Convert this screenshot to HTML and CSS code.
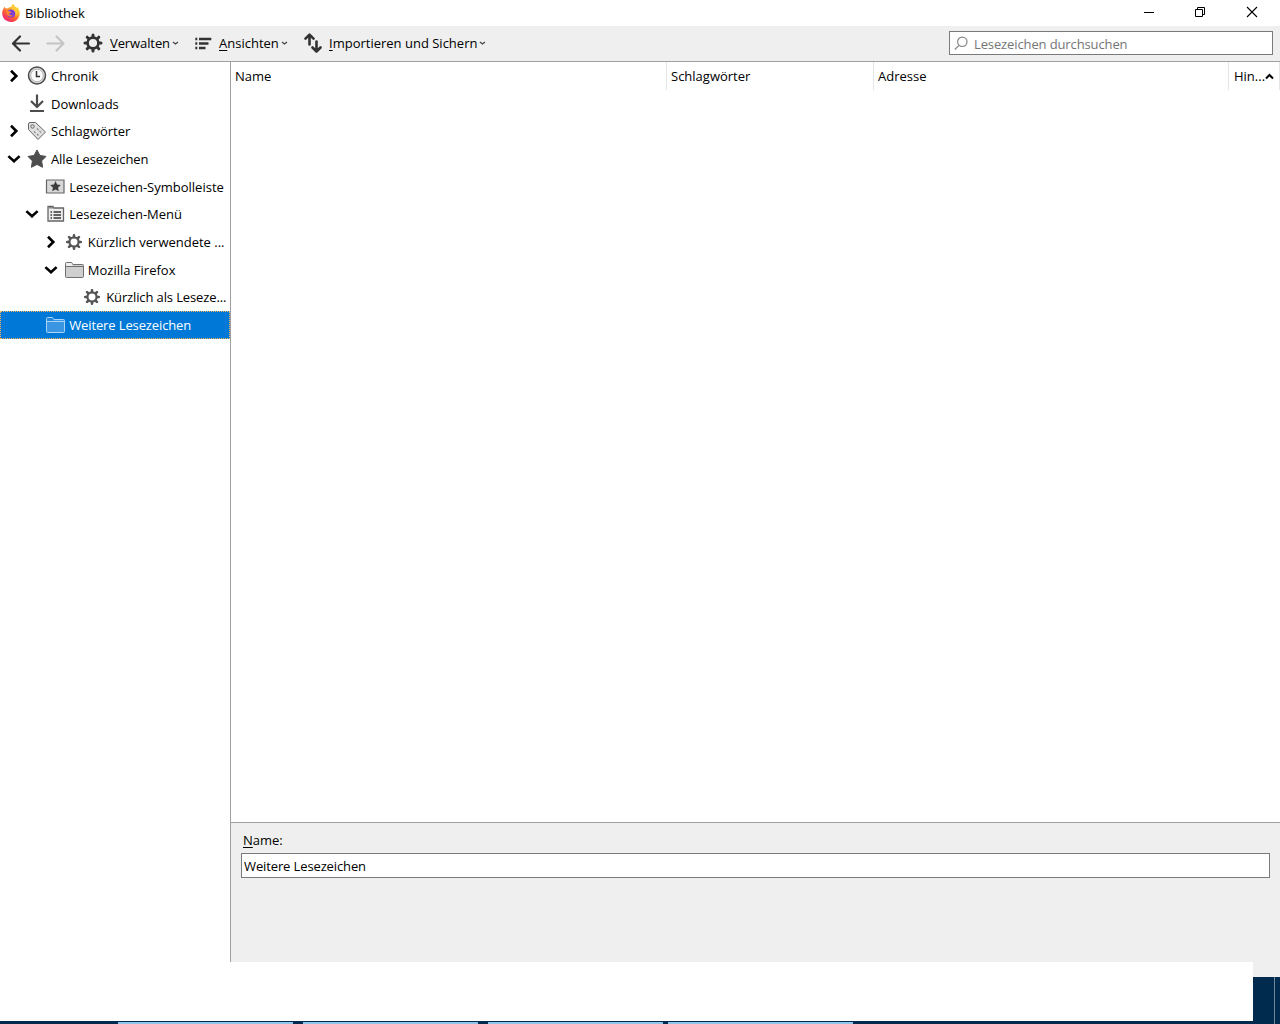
FILE: index.html
```html
<!DOCTYPE html>
<html lang="de">
<head>
    <meta charset="UTF-8">
    <title>Bibliothek</title>
    <link rel="stylesheet" href="styles.css">
</head>
<body>
    <!-- shared icons -->
    <svg class="defs">
        <symbol id="right" viewBox="0 0 14 14"><path d="M4 1.800 9.300 7 4 12.200" fill="none" stroke="#000" stroke-width="2.600"/></symbol>
        <symbol id="down" viewBox="0 0 14 14"><path d="M1.400 4.100 7 9.300l5.600-5.200" fill="none" stroke="#000" stroke-width="2.600"/></symbol>
        <symbol id="gear" viewBox="0 0 20 20">
            <g fill="none" stroke="currentColor">
                <circle cx="10" cy="10" r="5.400" stroke-width="2.600"/>
                <path stroke-width="3" stroke-linecap="round" d="M10 4V2M10 16v2M4 10H2M16 10h2M5.800 5.800 4.200 4.200M14.200 14.200l1.600 1.600M5.800 14.200l-1.600 1.600M14.200 5.800l1.600-1.600"/>
            </g>
        </symbol>
        <symbol id="folder" viewBox="0 0 20 18">
            <path d="M1.500 15.500V2.500q0-1 1-1h4.500q1 0 1.500 1l.5 1h9.500q1 0 1 1v11q0 1-1 1h-16q-1 0-1-1z" fill="var(--fill)" stroke="var(--line)"/>
            <path d="M2 2h5.300l.9 2v1.500H2z" fill="var(--tab)"/>
            <path d="M1.500 5.500h18" stroke="var(--line)"/>
        </symbol>
    </svg>

    <div class="window">
        <div class="titlebar">
            <svg class="logo" width="18" height="18" viewBox="0 0 18 18">
                <defs>
                    <linearGradient id="fire" x1=".85" y1=".05" x2=".2" y2=".95">
                        <stop offset="0" stop-color="#fff14a"/>
                        <stop offset=".35" stop-color="#ffb02e"/>
                        <stop offset=".65" stop-color="#ff5a36"/>
                        <stop offset="1" stop-color="#f0207c"/>
                    </linearGradient>
                </defs>
                <path d="M.2 9.800C.2 6.500 1.300 4.600 2.600 2.700L3.800 4.400l1.800-.2C7 3.200 8.500 2.800 9.600 3 9.400 1.600 10.200.6 11.300 0c.6 1.800 2.200 2.600 3.300 4 .3-.3.300-.8.200-1.300C16.800 4.200 17.900 7 17.800 9.700 17.500 14.500 13.700 18 9.100 18S.4 14.600.2 9.800z" fill="url(#fire)"/>
                <circle cx="9.200" cy="9.500" r="4" fill="#7f3fd6"/>
                <path d="M4 7.500c1.200-1 3.400-.3 5.200.5-.4 1.100-1.700 1.300-2.300 2 .6 1.500 2.600 1.700 4 .9-1.200 2.400-6 2.300-6.900-3.400z" fill="#ff8a2c"/>
                <path d="M9.600 3c-.2 2 1.300 2.700 2.700 3.800 1.600 1.400 1.700 3.500.8 5.300 2.900-1.600 3.300-5.400 1.500-8.100C13 2.800 12 2 11.300 0 10.200.6 9.400 1.600 9.600 3z" fill="#ffc83a"/>
            </svg>
            <span class="caption">Bibliothek</span>
            <svg class="controls" width="154" height="26" viewBox="0 0 154 26" fill="none" stroke="#000">
                <path d="M18 12.500h10"/>
                <path d="M69.500 9.500h7v7h-7zM71.500 9.500v-2h7v7h-2"/>
                <path d="m121 7 10 10M131 7l-10 10" stroke-width="1.100"/>
            </svg>
        </div>

        <div class="toolbar">
            <svg class="nav" width="20" height="18" viewBox="0 0 20 18"><path d="M18 9.500H2.500M9 2.500l-7 7 7 7"/></svg>
            <svg class="nav forward" width="20" height="18" viewBox="0 0 20 18"><path d="M1.500 9.500H17M10.500 2.500l7 7-7 7"/></svg>
            <div class="menu verwalten">
                <svg width="20" height="20"><use href="#gear"/></svg>
                <span class="label"><u>V</u>erwalten</span>
                <svg class="arrow" width="7" height="5" viewBox="0 0 7 5"><path d="m1 1 2.500 2L6 1"/></svg>
            </div>
            <div class="menu ansichten">
                <svg width="18" height="14" viewBox="0 0 18 14" fill="none" stroke="currentColor" stroke-width="2.300"><path d="M.3 3h2M4 3h12.300M.3 7.500h2M4 7.500h9.500M.3 12h2M4 12h6.500"/></svg>
                <span class="label"><u>A</u>nsichten</span>
                <svg class="arrow" width="7" height="5" viewBox="0 0 7 5"><path d="m1 1 2.500 2L6 1"/></svg>
            </div>
            <div class="menu import">
                <svg width="18" height="20" viewBox="0 0 18 20" fill="none" stroke="currentColor" stroke-width="2.600" stroke-linecap="round" stroke-linejoin="round"><path d="M5.500 11.500V2M1.500 5.700l4-4 4 4M12.500 8.500v10M8.500 14.500l4 4 4-4"/></svg>
                <span class="label"><u>I</u>mportieren und Sichern</span>
                <svg class="arrow" width="7" height="5" viewBox="0 0 7 5"><path d="m1 1 2.500 2L6 1"/></svg>
            </div>
            <div class="search">
                <svg width="15" height="15" viewBox="0 0 15 15" fill="none" stroke="#858585" stroke-width="1.200"><circle cx="8.300" cy="5.800" r="4.700"/><path d="M5 9.300.8 13.500"/></svg>
                <span>Lesezeichen durchsuchen</span>
            </div>
        </div>

        <div class="main">
            <div class="tree">
                <div class="row">
                    <svg class="twisty"><use href="#right"/></svg>
                    <svg class="icon" viewBox="0 0 20 20"><circle cx="10" cy="9.500" r="8.500" fill="#ddd" stroke="#4a4a4a" stroke-width="1.500"/><circle cx="10" cy="9.500" r="6.300" fill="#fafafa" stroke="#999" stroke-width=".7"/><path d="M9.500 5v5.500H13" fill="none" stroke="#333" stroke-width="1.500"/></svg>
                    <span>Chronik</span>
                </div>
                <div class="row">
                    <svg class="twisty"></svg>
                    <svg class="icon" viewBox="0 0 20 20" fill="none" stroke="#4d4d4d" stroke-width="2.200"><path d="M10 .5v12.500M4 7l6 6 6-6M3 17h14"/></svg>
                    <span>Downloads</span>
                </div>
                <div class="row">
                    <svg class="twisty"><use href="#right"/></svg>
                    <svg class="icon" viewBox="0 0 20 20" fill="#e0e0e0" stroke="#666"><path d="M1.500 3q0-1.500 1.500-1.500h5.500l10 9.500-7.500 7.500-9.500-10z"/><circle cx="5.500" cy="5.500" r="1.700"/><path d="m7 10.500 1.500 1.500M10 7.500l1.500 1.500M10 13l1.500 1.500M12.500 10l1.500 1.500" stroke-width="1.100" stroke="#888"/></svg>
                    <span>Schlagwörter</span>
                </div>
                <div class="row">
                    <svg class="twisty"><use href="#down"/></svg>
                    <svg class="icon" viewBox="0 0 20 20"><path d="m10 .9 2.900 5.600 6.100.9-4.400 4.500 1 6.400L10 15.400l-5.600 2.900 1-6.400L1 7.400l6.100-.9z" fill="#4d4d4d" stroke="#4d4d4d" stroke-linejoin="round"/></svg>
                    <span class="tight">Alle Lesezeichen</span>
                </div>
                <div class="row level-1">
                    <svg class="twisty"></svg>
                    <svg class="icon" viewBox="0 0 20 20"><path d="M1.500 3h17.500v13H1.500z" fill="#d8d8d8" stroke="#666" stroke-width="1.200"/><path d="m10.500 4 1.600 3.400 3.800.5-2.800 2.600.7 3.800-3.300-1.800-3.300 1.800.7-3.800-2.800-2.600 3.800-.5z" fill="#3d3d3d"/></svg>
                    <span>Lesezeichen-Symbolleiste</span>
                </div>
                <div class="row level-1">
                    <svg class="twisty"><use href="#down"/></svg>
                    <svg class="icon" viewBox="0 0 20 20" fill="none" stroke="#666"><path d="M3 17V2.500h5l1 1.500h9.500v13z" fill="#ececec" stroke-width="1.300"/><path d="M3.500 3H8l1 1.500H3.500z" fill="#888" stroke="none"/><path d="M5.500 8H7M8.500 8H16M5.500 11H7M8.500 11H16M5.500 14H7M8.500 14H16" stroke="#333" stroke-width="1.300"/></svg>
                    <span>Lesezeichen-Menü</span>
                </div>
                <div class="row level-2">
                    <svg class="twisty"><use href="#right"/></svg>
                    <svg class="icon gear"><use href="#gear"/></svg>
                    <span>Kürzlich verwendete ...</span>
                </div>
                <div class="row level-2">
                    <svg class="twisty"><use href="#down"/></svg>
                    <svg class="icon folder"><use href="#folder"/></svg>
                    <span>Mozilla Firefox</span>
                </div>
                <div class="row level-3">
                    <svg class="twisty"></svg>
                    <svg class="icon gear"><use href="#gear"/></svg>
                    <span class="tight">Kürzlich als Leseze...</span>
                </div>
                <div class="row level-1 selected">
                    <svg class="twisty"></svg>
                    <svg class="icon folder"><use href="#folder"/></svg>
                    <span class="tight">Weitere Lesezeichen</span>
                </div>
            </div>

            <div class="content">
                <div class="list">
                    <div class="columns">
                        <div class="col">Name</div>
                        <div class="col">Schlagwörter</div>
                        <div class="col">Adresse</div>
                        <div class="col last">Hin...<svg width="9" height="7" viewBox="0 0 9 7"><path d="M1 5.500 4.500 2 8 5.500" fill="none" stroke="#000" stroke-width="2"/></svg></div>
                    </div>
                </div>
                <div class="details">
                    <label for="name"><u>N</u>ame:</label>
                    <input type="text" id="name" value="Weitere Lesezeichen">
                </div>
            </div>
        </div>
    </div>

    <div class="taskbar">
        <div class="task"></div>
        <div class="task"></div>
        <div class="task"></div>
        <div class="task wide"></div>
        <div class="show-desktop"></div>
    </div>
    <div class="cover"></div>
</body>
</html>
```
FILE: styles.css
```css
* {
    box-sizing: border-box;
}
body {
    margin: 0;
    height: 1024px;
    overflow: hidden;
    position: relative;
    background-color: #fff;
    font-family: "Open Sans", "Noto Sans", sans-serif;
    font-size: 13px;
    line-height: 18px;
    color: #000;
}
svg {
    display: block;
    flex: none;
}
u {
    text-underline-offset: 2px;
    text-decoration-thickness: 1px;
    text-decoration-skip-ink: none;
}
.defs {
    position: absolute;
    width: 0;
    height: 0;
}
.window {
    height: 977px;
    display: flex;
    flex-direction: column;
}
.titlebar {
    height: 26px;
    display: flex;
    align-items: center;
    padding-left: 2px;
}
.caption {
    margin-left: 5px;
    letter-spacing: -0.1px;
}
.controls {
    margin-left: auto;
}

/* toolbar */
.toolbar {
    height: 36px;
    display: flex;
    align-items: center;
    padding: 0 7px 1px 11px;
    background-color: #efefef;
    border-bottom: 1px solid #a0a0a0;
    color: #333;
}
.nav {
    fill: none;
    stroke: #333;
    stroke-width: 2.2;
    stroke-linecap: round;
    stroke-linejoin: round;
}
.forward {
    margin-left: 15px;
    stroke: #c4c4c4;
}
.menu {
    display: flex;
    align-items: center;
    white-space: nowrap;
}
.menu .label {
    color: #000;
}
.verwalten {
    margin-left: 17px;
    width: 112px;
}
.verwalten .label {
    margin-left: 7px;
    width: 62px;
    letter-spacing: -0.1px;
}
.ansichten {
    width: 109px;
}
.ansichten .label {
    margin-left: 6px;
    width: 62px;
}
.import .label {
    margin-left: 7px;
    width: 150px;
}
.arrow {
    fill: none;
    stroke: #444;
    stroke-width: 1.3;
}
.search {
    margin-left: auto;
    width: 324px;
    height: 24px;
    display: flex;
    align-items: center;
    padding-left: 4px;
    background-color: #fff;
    border: 1px solid #7a7a7a;
    color: #757575;
}
.search span {
    margin: 2px 0 0 5px;
    letter-spacing: -0.12px;
}

/* sidebar */
.main {
    flex: 1;
    display: flex;
    min-height: 0;
}
.tree {
    width: 231px;
    border-right: 1px solid #a0a0a0;
    overflow: hidden;
}
.row {
    height: 27.7px;
    display: flex;
    align-items: center;
    padding-left: 7px;
    white-space: nowrap;
    --fill: #cfcfcf;
    --tab: #eee;
    --line: #707070;
}
.row span {
    margin-left: 4px;
}
.row .tight {
    letter-spacing: -0.12px;
}
.level-1 {
    padding-left: 25.2px;
}
.level-2 {
    padding-left: 43.8px;
}
.level-3 {
    padding-left: 62.2px;
}
.twisty {
    width: 14px;
    height: 14px;
}
.icon {
    width: 20px;
    height: 20px;
    margin-left: 6px;
}
.gear {
    width: 18px;
    height: 18px;
    padding: 0.5px;
    margin: 0 1px 0 7px;
    color: #555;
}
.folder {
    height: 18px;
}
.selected {
    background-color: #0078d7;
    color: #fff;
    outline: 1px dotted #ffb65c;
    outline-offset: -1px;
    --fill: #3a96e2;
    --tab: #2388dc;
    --line: #a8d4f5;
}

/* list and details */
.content {
    flex: 1;
    display: flex;
    flex-direction: column;
}
.list {
    height: 760px;
}
.columns {
    display: grid;
    grid-template-columns: 436px 207px 355px 51px;
    height: 28px;
}
.col {
    display: flex;
    align-items: center;
    padding-left: 4px;
    border-right: 1px solid #e5e5e5;
}
.col.last {
    padding-left: 5px;
}
.details {
    flex: 1;
    padding: 8px 10px;
    background-color: #efefef;
    border-top: 1px solid #a0a0a0;
}
.details label {
    display: block;
    margin: 0 0 4px 2px;
}
.details input {
    display: block;
    width: 100%;
    height: 25px;
    padding: 1px 2px 0;
    border: 1px solid #7a7a7a;
    font: inherit;
    letter-spacing: -0.12px;
}

/* taskbar */
.taskbar {
    height: 47px;
    display: flex;
    align-items: flex-end;
    padding-left: 118px;
    background-color: #002b4e;
}
.task {
    width: 175px;
    height: 2px;
    margin-right: 10px;
    background-color: #91c5eb;
}
.task:nth-child(3) {
    margin-right: 5px;
}
.task.wide {
    width: 185px;
}
.show-desktop {
    width: 6px;
    height: 47px;
    margin-left: auto;
    border-left: 1px solid #6f8799;
}
.cover {
    position: absolute;
    left: 0;
    top: 962px;
    width: 1253px;
    height: 59px;
    background-color: #fff;
}
```
